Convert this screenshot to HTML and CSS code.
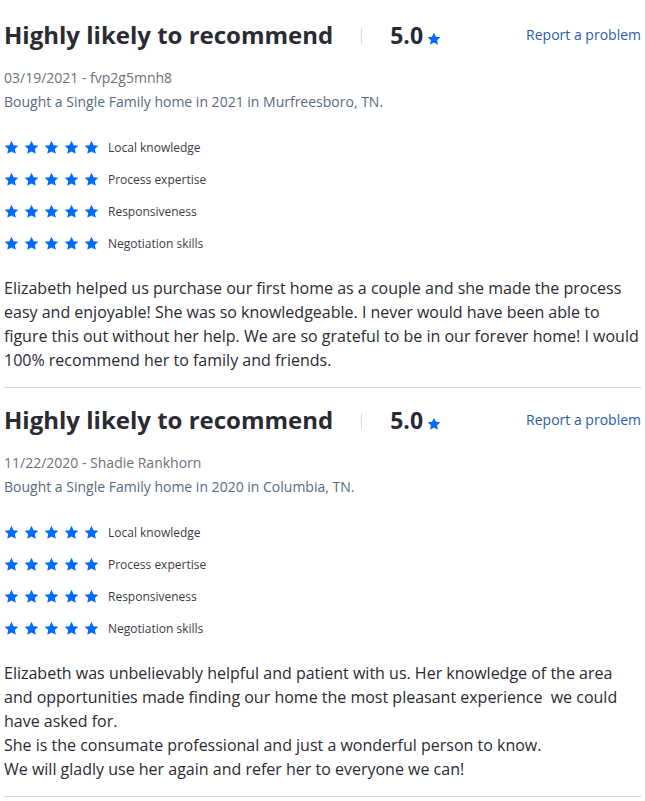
FILE: index.html
```html
<!DOCTYPE html>
<html lang="en">
<head>
<meta charset="utf-8">
<title>Reviews</title>
<link rel="stylesheet" href="styles.css">
</head>
<body>
<svg width="0" height="0" class="defs" aria-hidden="true">
  <defs>
    <symbol id="star" viewBox="0 0 24 24">
      <path d="M12 1.2l3.3 7 7.7.9-5.7 5.2 1.5 7.7L12 18.2 5.2 22l1.5-7.7L1 9.1l7.7-.9z"/>
    </symbol>
  </defs>
</svg>
<main class="reviews">
  <article class="review">
    <header class="review-head">
      <h2 class="review-title">Highly likely to recommend</h2>
      <span class="sep"></span>
      <span class="score">5.0</span>
      <svg class="score-star"><use href="#star"/></svg>
      <a class="report" href="#">Report a problem</a>
    </header>
    <div class="meta">03/19/2021 - fvp2g5mnh8</div>
    <div class="bought">Bought a Single Family home in 2021 in Murfreesboro, TN.</div>
    <ul class="ratings">
      <li class="rating"><span class="stars"><svg><use href="#star"/></svg><svg><use href="#star"/></svg><svg><use href="#star"/></svg><svg><use href="#star"/></svg><svg><use href="#star"/></svg></span><span class="label">Local knowledge</span></li>
      <li class="rating"><span class="stars"><svg><use href="#star"/></svg><svg><use href="#star"/></svg><svg><use href="#star"/></svg><svg><use href="#star"/></svg><svg><use href="#star"/></svg></span><span class="label">Process expertise</span></li>
      <li class="rating"><span class="stars"><svg><use href="#star"/></svg><svg><use href="#star"/></svg><svg><use href="#star"/></svg><svg><use href="#star"/></svg><svg><use href="#star"/></svg></span><span class="label">Responsiveness</span></li>
      <li class="rating"><span class="stars"><svg><use href="#star"/></svg><svg><use href="#star"/></svg><svg><use href="#star"/></svg><svg><use href="#star"/></svg><svg><use href="#star"/></svg></span><span class="label">Negotiation skills</span></li>
    </ul>
    <p class="body">Elizabeth helped us purchase our first home as a couple and she made the process easy and enjoyable! She was so knowledgeable. I never would have been able to figure this out without her help. We are so grateful to be in our forever home! I would 100% recommend her to family and friends.</p>
  </article>
  <article class="review">
    <header class="review-head">
      <h2 class="review-title">Highly likely to recommend</h2>
      <span class="sep"></span>
      <span class="score">5.0</span>
      <svg class="score-star"><use href="#star"/></svg>
      <a class="report" href="#">Report a problem</a>
    </header>
    <div class="meta">11/22/2020 - Shadie Rankhorn</div>
    <div class="bought">Bought a Single Family home in 2020 in Columbia, TN.</div>
    <ul class="ratings">
      <li class="rating"><span class="stars"><svg><use href="#star"/></svg><svg><use href="#star"/></svg><svg><use href="#star"/></svg><svg><use href="#star"/></svg><svg><use href="#star"/></svg></span><span class="label">Local knowledge</span></li>
      <li class="rating"><span class="stars"><svg><use href="#star"/></svg><svg><use href="#star"/></svg><svg><use href="#star"/></svg><svg><use href="#star"/></svg><svg><use href="#star"/></svg></span><span class="label">Process expertise</span></li>
      <li class="rating"><span class="stars"><svg><use href="#star"/></svg><svg><use href="#star"/></svg><svg><use href="#star"/></svg><svg><use href="#star"/></svg><svg><use href="#star"/></svg></span><span class="label">Responsiveness</span></li>
      <li class="rating"><span class="stars"><svg><use href="#star"/></svg><svg><use href="#star"/></svg><svg><use href="#star"/></svg><svg><use href="#star"/></svg><svg><use href="#star"/></svg></span><span class="label">Negotiation skills</span></li>
    </ul>
    <p class="body">Elizabeth was unbelievably helpful and patient with us. Her knowledge of the area and opportunities made finding our home the most pleasant experience &nbsp;we could have asked for.<br>She is the consumate professional and just a wonderful person to know.<br>We will gladly use her again and refer her to everyone we can!</p>
  </article>
</main>
</body>
</html>
```
FILE: styles.css
```css
* { box-sizing: border-box; }
html, body { margin: 0; padding: 0; background: #fff; }
body {
  font-family: "Open Sans", "Liberation Sans", sans-serif;
  color: #2a2a33;
}
.defs { position: absolute; width: 0; height: 0; }
.reviews {
  padding: 3px 4px 0 4px;
  width: 645px;
}
.review {
  padding: 15px 0;
  border-bottom: 1px solid #d1d1d5;
}
.review-head {
  display: flex;
  align-items: center;
  height: 34px;
}
.review-title {
  margin: 0;
  font-size: 24px;
  font-weight: 700;
  line-height: 34px;
  color: #2a2a33;
}
.sep {
  width: 1px;
  height: 16px;
  background: #dcdce0;
  margin: 2px 28px 0 28px;
}
.score {
  font-size: 23px;
  font-weight: 700;
  line-height: 34px;
  color: #2a2a33;
}
.score-star {
  width: 14px;
  height: 14px;
  fill: #006aff;
  margin: 7px 0 0 4px;
}
.report {
  margin-left: auto;
  font-size: 14px;
  color: #2a5ca8;
  text-decoration: none;
  line-height: 34px;
}
.meta {
  margin-top: 14px;
  font-size: 14px;
  line-height: 24px;
  color: #6d717a;
}
.bought {
  font-size: 14px;
  line-height: 24px;
  color: #586a80;
}
.ratings {
  list-style: none;
  margin: 21px 0 0 0;
  padding: 0;
  display: flex;
  flex-direction: column;
  gap: 8px;
}
.rating {
  display: flex;
  align-items: center;
  height: 24px;
}
.stars {
  display: flex;
  gap: 5px;
  margin-right: 9px;
}
.stars svg {
  width: 15px;
  height: 15px;
  fill: #006aff;
}
.label {
  font-size: 12px;
  color: #3b3b43;
}
.body {
  margin: 21px 0 0 0;
  font-size: 16px;
  line-height: 24px;
  color: #2a2a33;
}
```
